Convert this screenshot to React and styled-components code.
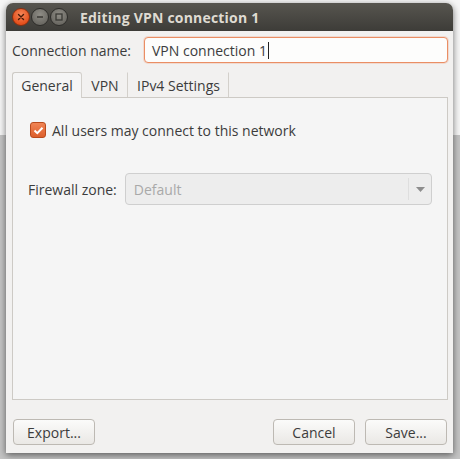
import React from "react";
import styled, { createGlobalStyle } from "styled-components";

const GlobalStyle = createGlobalStyle`
  html, body {
    margin: 0;
    padding: 0;
  }
  body {
    font-family: "Open Sans", "DejaVu Sans", sans-serif;
    font-size: 14px;
    color: #3c3c3c;
  }
`;

const Desktop = styled.div`
  width: 460px;
  height: 459px;
  box-sizing: border-box;
  padding: 3px 0 0 6px;
  background: linear-gradient(to bottom, #f6f6f6 0, #f6f6f6 135px, #c4c4c4 135px);
  overflow: hidden;
`;

const Window = styled.div`
  width: 447px;
  height: 450px;
  display: flex;
  flex-direction: column;
  background: #f2f1f0;
  border-radius: 7px 7px 0 0;
  box-shadow: 0 2px 7px rgba(0, 0, 0, 0.55);
  overflow: hidden;
`;

const TitleBar = styled.div`
  height: 28px;
  flex: none;
  display: flex;
  align-items: center;
  padding-left: 6px;
  background: linear-gradient(to bottom, #57554f, #3d3c38);
`;

const Controls = styled.div`
  display: flex;
  gap: 1px;
  margin-right: 12px;
`;

const WinButton = styled.div`
  width: 18px;
  height: 18px;
  border-radius: 50%;
  box-sizing: border-box;
  display: flex;
  align-items: center;
  justify-content: center;
  border: 1px solid ${(p) => (p.$close ? "#8a2f10" : "#2e2d2a")};
  background: ${(p) =>
    p.$close
      ? "radial-gradient(circle at 50% 35%, #f7885a, #e4501d 70%)"
      : "radial-gradient(circle at 50% 35%, #8f8d86, #6c6a64 70%)"};
`;

const Title = styled.div`
  font-weight: 700;
  font-size: 14px;
  color: #dfdbd2;
  letter-spacing: 0.2px;
`;

const Body = styled.div`
  flex: 1;
  display: flex;
  flex-direction: column;
  padding: 6px 5px 8px 6px;
`;

const NameRow = styled.div`
  display: flex;
  align-items: center;
  justify-content: space-between;
  height: 26px;
`;

const Label = styled.span`
  color: #3c3c3c;
  white-space: nowrap;
`;

const TextInput = styled.div`
  width: 304px;
  height: 26px;
  box-sizing: border-box;
  display: flex;
  align-items: center;
  padding-left: 7px;
  background: #fdfdfc;
  border: 1px solid #ea8e64;
  border-radius: 4px;
  box-shadow: 0 0 0 1px rgba(240, 150, 110, 0.25);
`;

const Caret = styled.span`
  display: inline-block;
  width: 1px;
  height: 17px;
  margin-left: 1px;
  background: #222;
`;

const Tabs = styled.div`
  display: flex;
  margin-top: 9px;
  height: 25px;
`;

const Tab = styled.div`
  width: ${(p) => p.$w}px;
  box-sizing: border-box;
  display: flex;
  align-items: center;
  justify-content: center;
  color: #3c3c3c;
  background: ${(p) => (p.$active ? "#f5f5f5" : "transparent")};
  border: 1px solid ${(p) => (p.$active ? "#cdcac5" : "transparent")};
  border-bottom: none;
  border-right: 1px solid #d3d0cb;
  border-radius: ${(p) => (p.$active ? "3px 3px 0 0" : "0")};
  margin-bottom: ${(p) => (p.$active ? "-1px" : "0")};
  position: relative;
  z-index: ${(p) => (p.$active ? 1 : 0)};
`;

const Panel = styled.div`
  height: 303px;
  box-sizing: border-box;
  background: #f5f5f5;
  border: 1px solid #cdcac5;
  display: flex;
  flex-direction: column;
  padding: 23px 15px 0 15px;
`;

const CheckRow = styled.label`
  display: flex;
  align-items: center;
  gap: 6px;
  padding-left: 2px;
  height: 18px;
`;

const CheckBox = styled.span`
  width: 16px;
  height: 16px;
  box-sizing: border-box;
  border-radius: 3px;
  border: 1px solid #b94a1c;
  background: linear-gradient(to bottom, #f08454, #dd5f2c);
  display: flex;
  align-items: center;
  justify-content: center;
`;

const ZoneRow = styled.div`
  display: flex;
  align-items: center;
  gap: 8px;
  margin-top: 34px;
  height: 32px;
`;

const Combo = styled.div`
  width: 309px;
  height: 32px;
  box-sizing: border-box;
  display: flex;
  align-items: center;
  background: #ededed;
  border: 1px solid #cfcfcf;
  border-radius: 4px;
  color: #a9a9a9;
`;

const ComboText = styled.span`
  flex: 1;
  padding-left: 8px;
`;

const ComboArrow = styled.span`
  width: 22px;
  height: 22px;
  border-left: 1px solid #dedede;
  display: flex;
  align-items: center;
  justify-content: center;
`;

const Footer = styled.div`
  display: flex;
  align-items: center;
  margin-top: 19px;
  padding-left: 1px;
  gap: 10px;
`;

const Spacer = styled.div`
  flex: 1;
`;

const Button = styled.div`
  width: 82px;
  height: 26px;
  box-sizing: border-box;
  display: flex;
  align-items: center;
  justify-content: center;
  border: 1px solid #bdb9b3;
  border-radius: 4px;
  background: linear-gradient(to bottom, #fbfbfa, #eae8e5);
  color: #3c3c3c;
  margin-right: ${(p) => (p.$last ? "1px" : "0")};
`;

export default function App() {
  return (
    <>
      <GlobalStyle />
      <Desktop>
        <Window>
          <TitleBar>
            <Controls>
              <WinButton $close>
                <svg width="8" height="8" viewBox="0 0 8 8">
                  <path d="M1.5 1.5 L6.5 6.5 M6.5 1.5 L1.5 6.5" stroke="#4a1a08" strokeWidth="1.4" strokeLinecap="round" />
                </svg>
              </WinButton>
              <WinButton>
                <svg width="8" height="8" viewBox="0 0 8 8">
                  <path d="M1 4 H7" stroke="#3a3935" strokeWidth="1.6" />
                </svg>
              </WinButton>
              <WinButton>
                <svg width="8" height="8" viewBox="0 0 8 8">
                  <rect x="1" y="1" width="6" height="6" fill="none" stroke="#3a3935" strokeWidth="1.3" />
                </svg>
              </WinButton>
            </Controls>
            <Title>Editing VPN connection 1</Title>
          </TitleBar>
          <Body>
            <NameRow>
              <Label>Connection name:</Label>
              <TextInput>
                VPN connection 1<Caret />
              </TextInput>
            </NameRow>
            <Tabs>
              <Tab $w={70} $active>General</Tab>
              <Tab $w={46}>VPN</Tab>
              <Tab $w={101}>IPv4 Settings</Tab>
            </Tabs>
            <Panel>
              <CheckRow>
                <CheckBox>
                  <svg width="11" height="9" viewBox="0 0 11 9">
                    <path d="M1.5 4.5 L4.3 7.2 L9.5 1.8" fill="none" stroke="#fff" strokeWidth="2" />
                  </svg>
                </CheckBox>
                All users may connect to this network
              </CheckRow>
              <ZoneRow>
                <Label>Firewall zone:</Label>
                <Combo>
                  <ComboText>Default</ComboText>
                  <ComboArrow>
                    <svg width="9" height="5" viewBox="0 0 9 5">
                      <path d="M0 0 H9 L4.5 5 Z" fill="#8d8d8d" />
                    </svg>
                  </ComboArrow>
                </Combo>
              </ZoneRow>
            </Panel>
            <Footer>
              <Button>Export...</Button>
              <Spacer />
              <Button>Cancel</Button>
              <Button $last>Save...</Button>
            </Footer>
          </Body>
        </Window>
      </Desktop>
    </>
  );
}
